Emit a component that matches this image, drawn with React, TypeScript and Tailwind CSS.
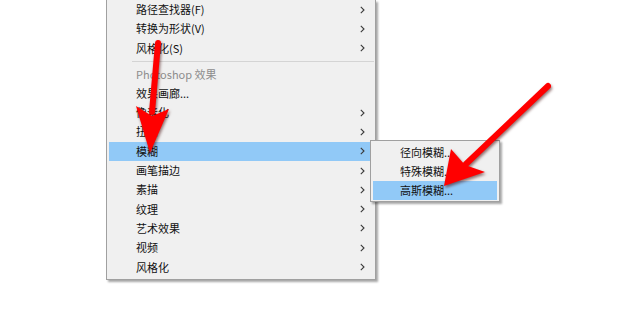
import React from 'react';

const font = { fontFamily: '"Noto Sans CJK SC", "Noto Sans", sans-serif' };

type Item = { label: string; sub?: boolean; active?: boolean; muted?: boolean };

const topItems: Item[] = [
  { label: '路径查找器(F)', sub: true },
  { label: '转换为形状(V)', sub: true },
  { label: '风格化(S)', sub: true },
];

const effectItems: Item[] = [
  { label: 'Photoshop 效果', muted: true },
  { label: '效果画廊...' },
  { label: '像素化', sub: true },
  { label: '扭曲', sub: true },
  { label: '模糊', sub: true, active: true },
  { label: '画笔描边', sub: true },
  { label: '素描', sub: true },
  { label: '纹理', sub: true },
  { label: '艺术效果', sub: true },
  { label: '视频', sub: true },
  { label: '风格化', sub: true },
];

const blurItems: Item[] = [
  { label: '径向模糊...' },
  { label: '特殊模糊...' },
  { label: '高斯模糊...', active: true },
];

function Chevron() {
  return (
    <svg width="5" height="8" viewBox="0 0 5 8" className="shrink-0">
      <path d="M0.8 0.8 L4 4 L0.8 7.2" fill="none" stroke="#3a3a3a" strokeWidth="1.1" />
    </svg>
  );
}

function Row({ item }: { item: Item }) {
  return (
    <div
      className={
        'flex items-center h-[19.3px] mx-[2px] pl-[27px] pr-[8px] text-[11px] leading-none ' +
        (item.active ? 'bg-[#91c9f7] ' : '') +
        (item.muted ? 'text-[#8d8d8d]' : 'text-[#111]')
      }
    >
      <span className="flex-1 whitespace-nowrap">{item.label}</span>
      {item.sub && <Chevron />}
    </div>
  );
}

export default function App() {
  return (
    <div className="relative w-[620px] h-[309px] bg-white overflow-hidden" style={font}>
      <div className="flex pl-[106px]">
        <div className="w-[270px] bg-[#f0f0f0] border-l border-r border-b border-[#a0a0a0] pb-[2px] shadow-[2px_2px_2px_rgba(0,0,0,0.35)]">
          {topItems.map((it) => (
            <Row key={it.label} item={it} />
          ))}
          <div className="h-[6.5px] flex items-center pl-[25px] pr-[1px]">
            <div className="flex-1 h-px bg-[#d4d4d4]" />
          </div>
          {effectItems.map((it) => (
            <Row key={it.label} item={it} />
          ))}
        </div>
      </div>

      {/* 模糊 submenu */}
      <div className="absolute left-[370px] top-[140px] w-[130px] bg-[#f0f0f0] border border-[#a0a0a0] pt-[1.5px] pb-[0.5px] shadow-[2px_2px_2px_rgba(0,0,0,0.35)]">
        {blurItems.map((it) => (
          <Row key={it.label} item={it} />
        ))}
      </div>

      <svg
        className="absolute inset-0 pointer-events-none"
        width="620"
        height="309"
        style={{ filter: 'drop-shadow(1px 2px 1.5px rgba(60,0,0,0.55))' }}
      >
        <line x1="158" y1="43" x2="152" y2="112" stroke="#ff0000" strokeWidth="6" strokeLinecap="round" />
        <polygon points="150,153 136,106 152,116 169,109" fill="#ff0000" />
        <line x1="548" y1="86" x2="466" y2="164" stroke="#ff0000" strokeWidth="6" strokeLinecap="round" />
        <polygon points="444,186 451,149 465,165 485,172" fill="#ff0000" />
      </svg>
    </div>
  );
}
